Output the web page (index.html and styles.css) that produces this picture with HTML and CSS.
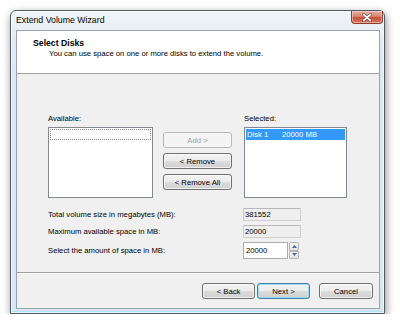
FILE: index.html
```html
<!DOCTYPE html>
<html lang="en">
<head>
  <meta charset="UTF-8" />
  <title>Extend Volume Wizard</title>
  <link rel="stylesheet" href="styles.css">
</head>
<body>
  <div class="window">
    <div class="titlebar">
      <span class="title">Extend Volume Wizard</span>
      <div class="close">
        <svg width="12" height="9" viewBox="0 0 12 9">
          <path d="M2.5 1.5 L9.5 7.5 M9.5 1.5 L2.5 7.5" stroke="#7a2a20" stroke-width="2.8" stroke-linecap="round"/>
          <path d="M2.5 1.5 L9.5 7.5 M9.5 1.5 L2.5 7.5" stroke="#fff" stroke-width="1.7" stroke-linecap="round"/>
        </svg>
      </div>
    </div>

    <div class="client">
      <div class="header">
        <div class="head-title">Select Disks</div>
        <div class="head-sub">You can use space on one or more disks to extend the volume.</div>
      </div>

      <div class="content">
        <div class="lists">
          <div class="col">
            <label>Available:</label>
            <div class="listbox">
              <div class="row focus"></div>
            </div>
          </div>
          <div class="col mid">
            <button class="btn" disabled>Add &gt;</button>
            <button class="btn">&lt; Remove</button>
            <button class="btn">&lt; Remove All</button>
          </div>
          <div class="col">
            <label>Selected:</label>
            <div class="listbox">
              <div class="row selected"><span class="disk">Disk 1</span><span>20000 MB</span></div>
            </div>
          </div>
        </div>

        <div class="fields">
          <div class="field-row">
            <span class="field-label">Total volume size in megabytes (MB):</span>
            <div class="readonly">381552</div>
          </div>
          <div class="field-row">
            <span class="field-label">Maximum available space in MB:</span>
            <div class="readonly">20000</div>
          </div>
          <div class="field-row spin-row">
            <span class="field-label">Select the amount of space in MB:</span>
            <div class="spin">
              <div class="spin-input">20000</div>
              <div class="spin-btns">
                <div class="spin-btn">
                  <svg width="5" height="3" viewBox="0 0 5 3"><path d="M0 3 L2.5 0 L5 3 Z" fill="#4a6a9a"/></svg>
                </div>
                <div class="spin-btn">
                  <svg width="5" height="3" viewBox="0 0 5 3"><path d="M0 0 L5 0 L2.5 3 Z" fill="#4a6a9a"/></svg>
                </div>
              </div>
            </div>
          </div>
        </div>
      </div>

      <div class="footer">
        <button class="btn wide">&lt; Back</button>
        <button class="btn wide default">Next &gt;</button>
        <button class="btn wide cancel">Cancel</button>
      </div>
    </div>
  </div>
</body>
</html>
```

FILE: styles.css
```css
* {
  box-sizing: border-box;
}

body {
  margin: 0;
  background: #fff;
  font-family: 'Liberation Sans', Arial, sans-serif;
  font-size: 7.7px;
  color: #000;
}

.window {
  margin: 10px 0 0 10px;
  width: 375px;
  height: 304px;
  border: 1px solid #4f5b66;
  border-radius: 6px 6px 0 0;
  padding: 0 4px 4px 5px;
  background: linear-gradient(to bottom, #f1f5f9, #dfe8f0 40px, #d9e6f0);
  box-shadow: inset 0 0 0 1px rgba(255, 255, 255, 0.7), inset 0 -2px 0 #aee2f5, 1px 3px 9px rgba(0, 0, 0, 0.45);
  display: flex;
  flex-direction: column;
}

.titlebar {
  height: 19px;
  display: flex;
  justify-content: space-between;
  align-items: flex-start;
  margin-right: -3px;
}

.title {
  font-size: 8.75px;
  line-height: 19px;
  color: #000;
}

.close {
  width: 32px;
  height: 13px;
  border: 1px solid #8e3a2e;
  border-top: none;
  border-radius: 0 0 4px 4px;
  background: linear-gradient(to bottom, #eab2a4, #d98473 45%, #c8503b 55%, #d67a62);
  display: flex;
  align-items: center;
  justify-content: center;
  box-shadow: inset 0 0 0 1px rgba(255, 225, 215, 0.5);
}

.client {
  flex: 1;
  border: 1px solid #97a5b2;
  background: #f0f0f0;
  display: flex;
  flex-direction: column;
}

.header {
  background: #fff;
  height: 43px;
  border-bottom: 1px solid #a0a0a0;
  padding: 7px 0 0 16px;
}

.head-title {
  font-weight: bold;
  font-size: 8.7px;
  line-height: 11px;
}

.head-sub {
  margin-left: 16px;
  line-height: 10px;
}

.content {
  padding: 40px 0 0 31px;
  height: 199px;
  border-bottom: 1px solid #a0a0a0;
}

.lists {
  display: grid;
  grid-template-columns: 105px 69px 105px;
  column-gap: 10px;
}

.lists .col:last-child {
  margin-left: 2px;
}

.col {
  display: flex;
  flex-direction: column;
}

.col label {
  line-height: 10px;
  margin-bottom: 3px;
}

.listbox {
  height: 71px;
  border: 1px solid #828790;
  background: #fff;
  padding: 1px;
}

.row {
  height: 11px;
  line-height: 11px;
  padding-left: 1px;
}

.row.focus {
  border: 1px dotted #888;
}

.row.selected {
  background: #3399ff;
  color: #fff;
  display: flex;
}

.row .disk {
  width: 35px;
}

.mid {
  padding-top: 18px;
  gap: 5px;
}

.btn {
  height: 16px;
  padding: 0;
  font-family: inherit;
  font-size: 7.7px;
  color: #000;
  border: 1px solid #707070;
  border-radius: 3px;
  background: linear-gradient(to bottom, #f3f3f3, #ebebeb 50%, #dddddd 50%, #cfcfcf);
  box-shadow: inset 0 0 0 1px rgba(255, 255, 255, 0.7);
}

.btn:disabled {
  border-color: #b4b8bb;
  background: #f4f4f4;
  color: #a3a3a3;
  box-shadow: none;
}

.fields {
  margin-top: 10px;
  display: flex;
  flex-direction: column;
  gap: 4px;
}

.field-row {
  display: flex;
  align-items: center;
  height: 13px;
}

.field-row.spin-row {
  height: 17px;
}

.field-label {
  width: 195px;
}

.readonly {
  width: 58px;
  height: 13px;
  line-height: 11px;
  padding-left: 1px;
  border: 1px solid #cfcfcf;
  border-top-color: #b9b9b9;
  background: #efefef;
}

.spin {
  display: flex;
  gap: 1px;
  height: 17px;
}

.spin-input {
  width: 45px;
  border: 1px solid #abadb3;
  background: #fff;
  line-height: 15px;
  padding-left: 2px;
}

.spin-btns {
  width: 10px;
  display: flex;
  flex-direction: column;
}

.spin-btn {
  flex: 1;
  border: 1px solid #b8b8b8;
  border-radius: 1px;
  background: linear-gradient(to bottom, #f6f6f6, #e2e2e2);
  display: flex;
  align-items: center;
  justify-content: center;
}

.footer {
  flex: 1;
  border-top: 1px solid #fff;
  display: flex;
  justify-content: flex-end;
  align-items: flex-start;
  padding: 9px 6px 0 0;
  gap: 2px;
}

.btn.wide {
  width: 53px;
}

.btn.default {
  border-color: #3c7fb1;
  box-shadow: inset 0 0 0 1px #9fdcf6;
}

.btn.cancel {
  width: 54px;
  margin-left: 7px;
}
```
